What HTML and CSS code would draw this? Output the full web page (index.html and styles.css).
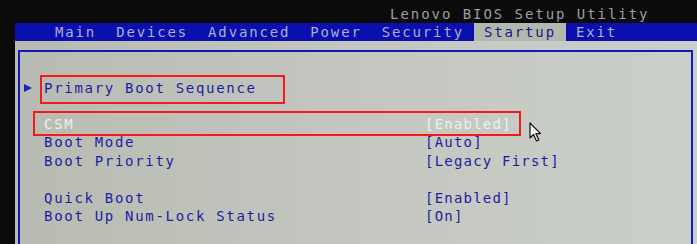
FILE: index.html
```html
<!DOCTYPE html>
<html lang="en">
<head>
<meta charset="UTF-8">
<title>Lenovo BIOS Setup Utility</title>
<link rel="stylesheet" href="styles.css">
</head>
<body>
<div class="screen">
    <div class="titlebar">Lenovo BIOS Setup Utility</div>

    <div class="menubar">
        <span class="tab">Main</span>
        <span class="tab">Devices</span>
        <span class="tab">Advanced</span>
        <span class="tab">Power</span>
        <span class="tab">Security</span>
        <span class="tab active">Startup</span>
        <span class="tab">Exit</span>
    </div>

    <div class="panel">
        <div class="frame">
            <div class="row submenu">
                <span class="arrow"><i class="tri"></i></span>
                <span class="label">Primary Boot Sequence</span>
                <span class="value"></span>
            </div>

            <div class="row selected">
                <span class="arrow"></span>
                <span class="label">CSM</span>
                <span class="value">[Enabled]</span>
            </div>
            <div class="row">
                <span class="arrow"></span>
                <span class="label">Boot Mode</span>
                <span class="value">[Auto]</span>
            </div>
            <div class="row">
                <span class="arrow"></span>
                <span class="label">Boot Priority</span>
                <span class="value">[Legacy First]</span>
            </div>
            <div class="row blank"></div>
            <div class="row">
                <span class="arrow"></span>
                <span class="label">Quick Boot</span>
                <span class="value">[Enabled]</span>
            </div>
            <div class="row">
                <span class="arrow"></span>
                <span class="label">Boot Up Num-Lock Status</span>
                <span class="value">[On]</span>
            </div>

            <!-- annotation boxes + mouse pointer drawn over the screen -->
            <div class="mark mark-seq"></div>
            <div class="mark mark-csm"></div>
            <svg class="pointer" width="13" height="20" viewBox="0 0 13 20">
                <path d="M1 1 L1 16 L4.5 12.5 L7.5 19 L9.8 18 L6.8 11.6 L11.5 11.6 Z" fill="#f4f4f4" stroke="#111" stroke-width="1.2" stroke-linejoin="round"/>
            </svg>
        </div>
    </div>
</div>
</body>
</html>
```

FILE: styles.css
```css
body {
  margin: 0;
  background-color: #0b0b0c;
  width: 697px;
  height: 244px;
  overflow: hidden;
  font-family: 'DejaVu Sans Mono', 'Liberation Mono', monospace;
  font-size: 14px;
}
.screen {
  margin-left: 15px;
}
.titlebar {
  height: 23px;
  line-height: 29px;
  padding-left: 375px;
  color: #9c9ea2;
  letter-spacing: 1.95px;
  white-space: nowrap;
}
.menubar {
  display: flex;
  height: 18px;
  line-height: 19px;
  padding-left: 30px;
  background-color: #0a0fae;
  white-space: nowrap;
}
.tab {
  color: #aab0d6;
  letter-spacing: 1.85px;
  padding: 0 10px;
}
.tab.active {
  background-color: #b3b8ad;
  color: #19198f;
}
.panel {
  padding: 9px 0 0 3px;
  height: 194px;
  background: linear-gradient(90deg, #b7bbb2 0%, #c3c7bf 50%, #cbcfca 100%);
}
.frame {
  position: relative;
  width: 671px;
  height: 167px;
  padding-top: 27px;
  border: 2px solid #1616b8;
  border-bottom: none;
}
.row {
  display: grid;
  grid-template-columns: 20px 381px auto;
  padding-left: 4px;
  height: 18.5px;
  line-height: 18.5px;
  color: #1c1ea2;
  white-space: nowrap;
}
.label {
  letter-spacing: 1.7px;
}
.value {
  letter-spacing: 1.2px;
}
.arrow {
  display: flex;
  align-items: center;
}
.tri {
  width: 0;
  height: 0;
  border-left: 8px solid #1d22b8;
  border-top: 4px solid transparent;
  border-bottom: 4px solid transparent;
}
.submenu {
  margin-bottom: 17px;
}
.selected {
  color: #eef0ec;
}
.mark {
  position: absolute;
  border: 2px solid #f01c1c;
}
.mark-seq {
  left: 20px;
  top: 23px;
  width: 241px;
  height: 25px;
}
.mark-csm {
  left: 13px;
  top: 59px;
  width: 484px;
  height: 21px;
}
.pointer {
  position: absolute;
  left: 509px;
  top: 70px;
}
```
